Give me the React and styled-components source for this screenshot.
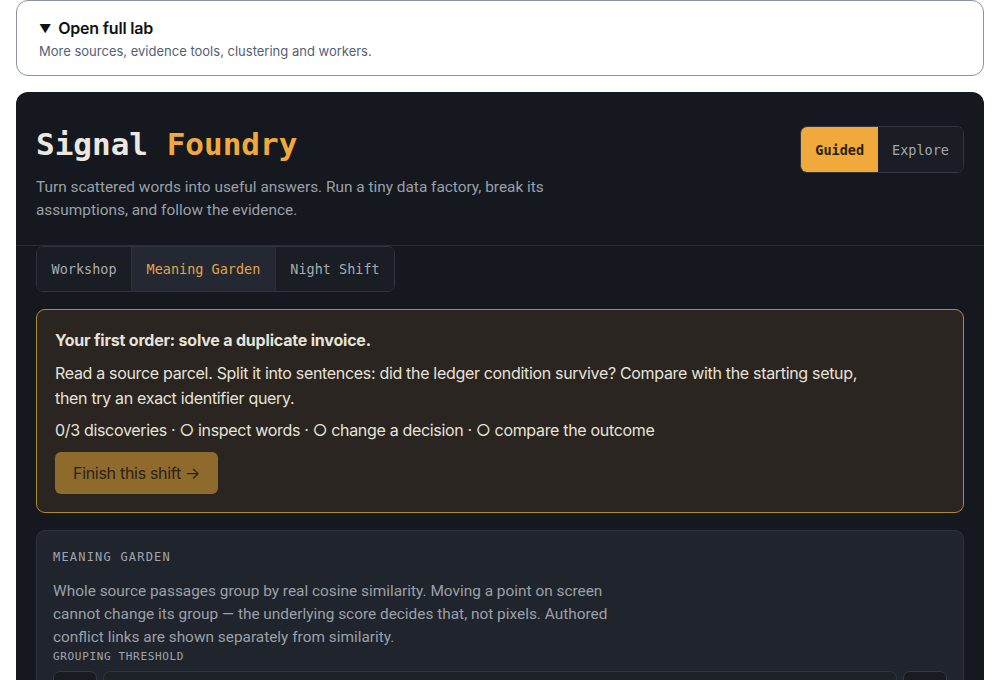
import styled, { createGlobalStyle } from 'styled-components';

const GlobalStyle = createGlobalStyle`
  html, body {
    margin: 0;
    padding: 0;
    background: #ffffff;
  }
  body {
    font-family: Inter, "Noto Sans", sans-serif;
    -webkit-font-smoothing: antialiased;
  }
  * { box-sizing: border-box; }
`;

const mono = `"DejaVu Sans Mono", "Liberation Mono", monospace`;

const Page = styled.div`
  padding: 0 16px;
  display: flex;
  flex-direction: column;
  gap: 16px;
`;

const LabDetails = styled.details`
  border: 1px solid #8b93a1;
  border-radius: 12px;
  padding: 16px 22px 15px;
  color: #111;
`;

const LabSummary = styled.summary`
  font-size: 16px;
  font-weight: 600;
  line-height: 22px;
  letter-spacing: -0.2px;
  cursor: pointer;
  list-style: none;
  &::-webkit-details-marker { display: none; }
  &::before {
    content: '▼';
    font-size: 12px;
    margin-right: 7px;
    position: relative;
    top: -1px;
  }
`;

const LabNote = styled.div`
  font-size: 13px;
  line-height: 18px;
  color: #566073;
  margin-top: 1px;
`;

const Foundry = styled.section`
  background: #15181e;
  border-radius: 12px;
  min-height: 620px;
  overflow: hidden;
`;

const Header = styled.header`
  display: flex;
  justify-content: space-between;
  align-items: flex-start;
  padding: 34px 20px 23px;
  border-bottom: 1px solid #2a2e36;
`;

const Title = styled.h1`
  margin: 0;
  font-family: ${mono};
  font-weight: 700;
  font-size: 31px;
  line-height: 36px;
  color: #ece8e0;
  span { color: #f2a93b; }
`;

const Lead = styled.p`
  margin: 14px 0 0;
  max-width: 540px;
  font-family: Roboto, "Noto Sans", sans-serif;
  font-size: 15.4px;
  line-height: 23px;
  color: #9ba0a9;
`;

const Toggle = styled.div`
  display: flex;
  border: 1px solid #30353e;
  border-radius: 7px;
  overflow: hidden;
`;

const ToggleButton = styled.button`
  height: 45px;
  padding: 0 14px;
  border: none;
  font-family: ${mono};
  font-size: 13.5px;
  font-weight: ${(p) => (p.active ? 700 : 400)};
  background: ${(p) => (p.active ? '#f2a93b' : '#1a1d23')};
  color: ${(p) => (p.active ? '#2a1f10' : '#a3a8b0')};
`;

const Body = styled.div`
  padding: 0 20px 20px;
  display: flex;
  flex-direction: column;
  gap: 17px;
`;

const Tabs = styled.div`
  display: flex;
  align-self: flex-start;
  border: 1px solid #2e333c;
  border-radius: 7px;
  overflow: hidden;
`;

const Tab = styled.button`
  height: 44px;
  padding: 0 14.5px;
  border: none;
  border-right: 1px solid #2a2f37;
  &:last-child { border-right: none; }
  font-family: ${mono};
  font-size: 13.5px;
  background: ${(p) => (p.active ? '#232832' : '#1a1d23')};
  color: ${(p) => (p.active ? '#e4a446' : '#a6abb3')};
`;

const OrderCard = styled.div`
  background: #2a2520;
  border: 1px solid #b08a3a;
  border-radius: 9px;
  padding: 18px 18px 18px;
  color: #e6e2da;
  font-size: 16px;
  line-height: 25px;
  letter-spacing: -0.32px;
`;

const OrderTitle = styled.div`
  font-weight: 700;
  letter-spacing: -0.2px;
  margin-bottom: 8px;
`;

const OrderText = styled.p`
  margin: 0 0 7px;
  max-width: 810px;
`;

const Progress = styled.div`
  margin-bottom: 9px;
`;

const FinishButton = styled.button`
  height: 42px;
  padding: 0 18px;
  border: none;
  border-radius: 6px;
  background: #8e6a2d;
  color: #2b2215;
  font-family: Inter, "Noto Sans", sans-serif;
  font-size: 16px;
  letter-spacing: -0.3px;
`;

const GardenCard = styled.div`
  background: #20242c;
  border: 1px solid #2d323b;
  border-radius: 9px;
  padding: 18px 16px 0;
  height: 160px;
  overflow: hidden;
`;

const Eyebrow = styled.div`
  font-family: ${mono};
  font-size: ${(p) => p.size || 12}px;
  letter-spacing: ${(p) => p.spacing || 0.1}em;
  text-transform: uppercase;
  color: #a0a5ad;
  line-height: 16px;
`;

const GardenText = styled.p`
  margin: 15px 0 0;
  max-width: 580px;
  font-family: Roboto, "Noto Sans", sans-serif;
  font-size: 15.4px;
  line-height: 23px;
  color: #9ba0a9;
`;

const ThresholdRow = styled.div`
  display: flex;
  gap: 6px;
  margin-top: 6px;
`;

const StepButton = styled.button`
  width: 44px;
  height: 36px;
  border: 1px solid #343a44;
  border-radius: 7px;
  background: #181b21;
`;

const Track = styled.div`
  flex: 1;
  height: 36px;
  border: 1px solid #30353e;
  border-radius: 7px;
  background: #1d2128;
`;

export default function App() {
  return (
    <Page>
      <GlobalStyle />
      <LabDetails open>
        <LabSummary>Open full lab</LabSummary>
        <LabNote>More sources, evidence tools, clustering and workers.</LabNote>
      </LabDetails>

      <Foundry>
        <Header>
          <div>
            <Title>
              Signal <span>Foundry</span>
            </Title>
            <Lead>
              Turn scattered words into useful answers. Run a tiny data factory, break its
              assumptions, and follow the evidence.
            </Lead>
          </div>
          <Toggle>
            <ToggleButton active>Guided</ToggleButton>
            <ToggleButton>Explore</ToggleButton>
          </Toggle>
        </Header>

        <Body>
          <Tabs>
            <Tab>Workshop</Tab>
            <Tab active>Meaning Garden</Tab>
            <Tab>Night Shift</Tab>
          </Tabs>

          <OrderCard>
            <OrderTitle>Your first order: solve a duplicate invoice.</OrderTitle>
            <OrderText>
              Read a source parcel. Split it into sentences: did the ledger condition survive? Compare
              with the starting setup, then try an exact identifier query.
            </OrderText>
            <Progress>
              0/3 discoveries · ○ inspect words · ○ change a decision · ○ compare the outcome
            </Progress>
            <FinishButton>Finish this shift →</FinishButton>
          </OrderCard>

          <GardenCard>
            <Eyebrow>Meaning Garden</Eyebrow>
            <GardenText>
              Whole source passages group by real cosine similarity. Moving a point on screen
              cannot change its group — the underlying score decides that, not pixels. Authored
              conflict links are shown separately from similarity.
            </GardenText>
            <Eyebrow size={11} spacing={0.06}>Grouping threshold</Eyebrow>
            <ThresholdRow>
              <StepButton />
              <Track />
              <StepButton />
            </ThresholdRow>
          </GardenCard>
        </Body>
      </Foundry>
    </Page>
  );
}
